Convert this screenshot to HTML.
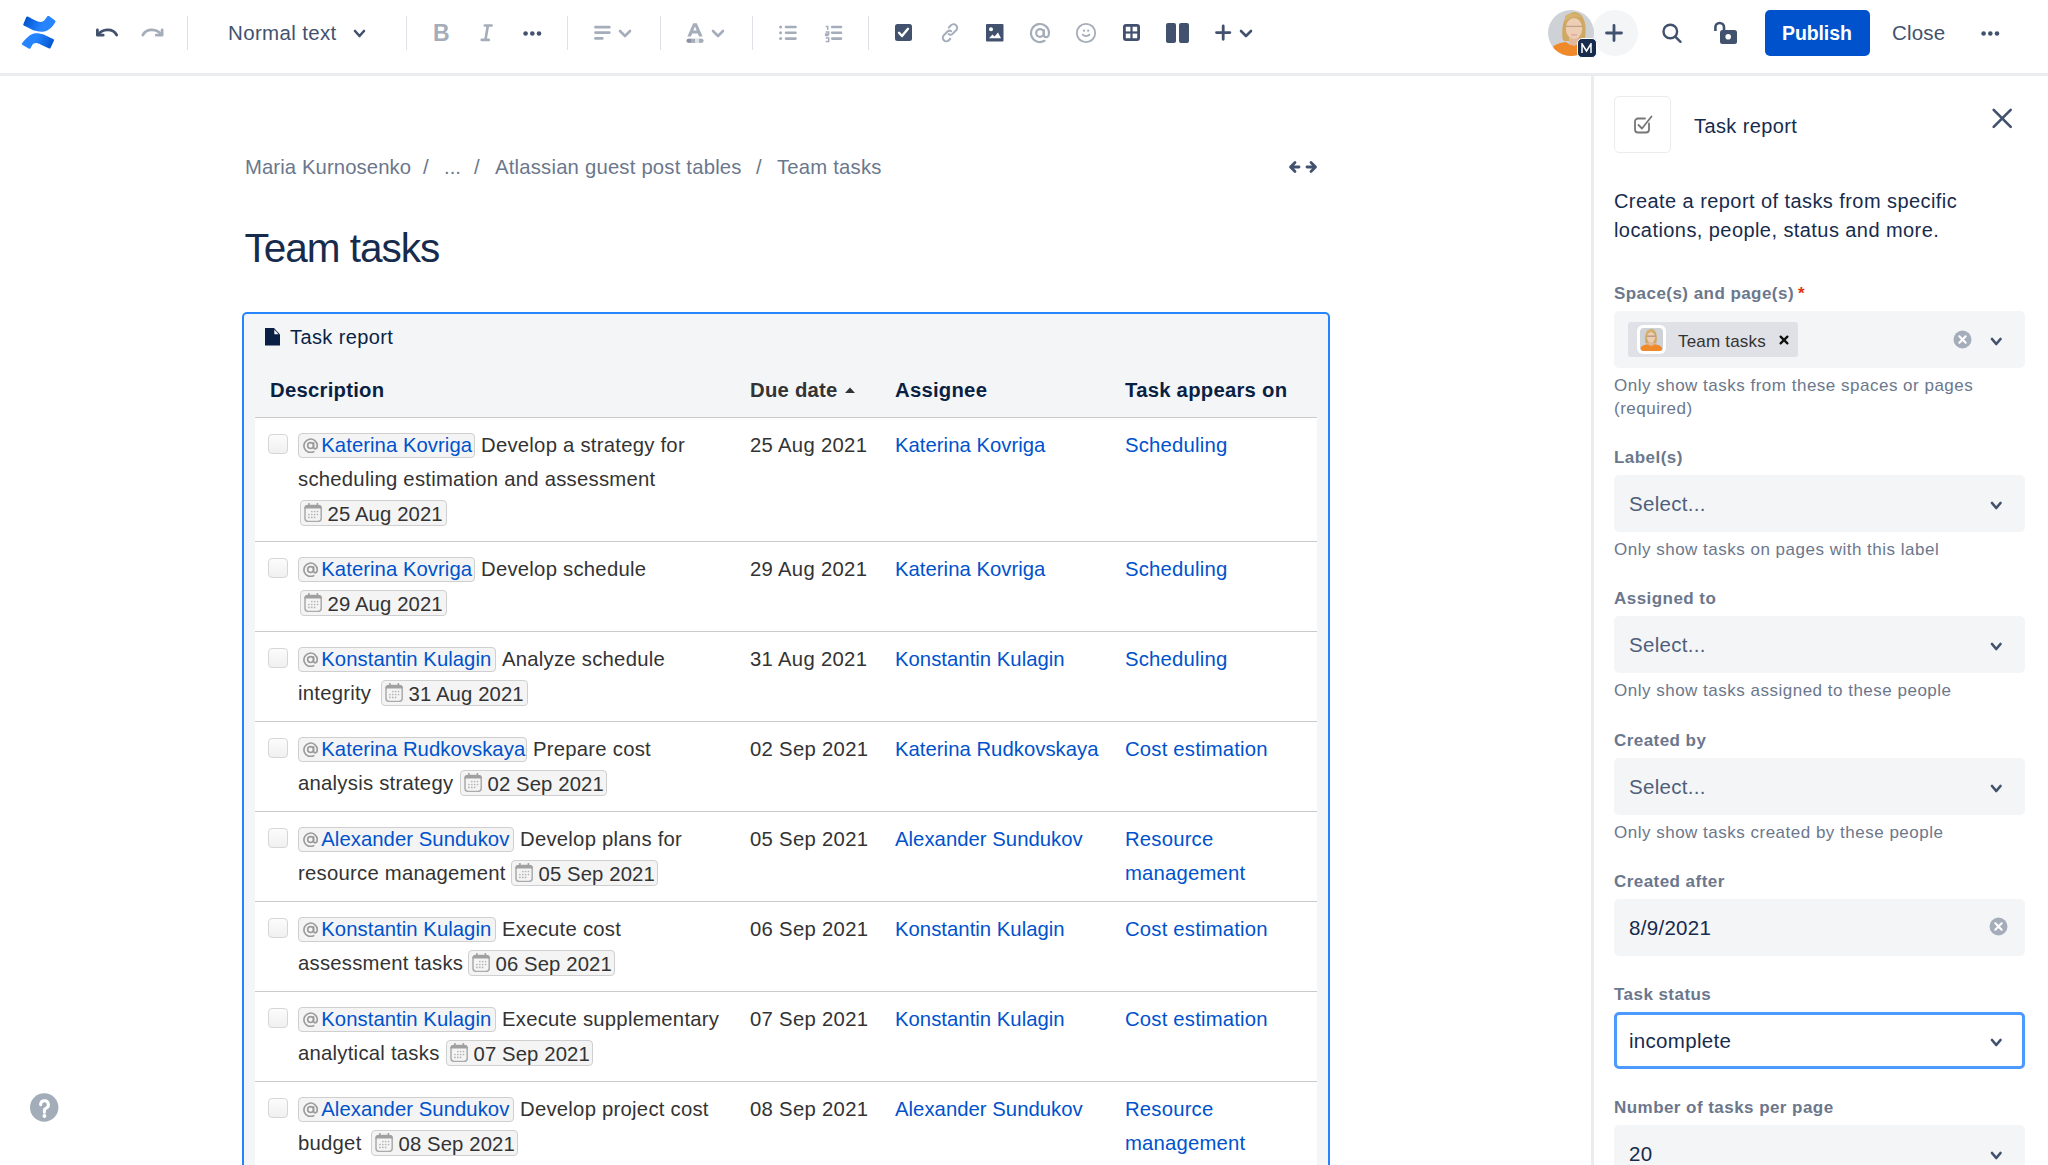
<!DOCTYPE html>
<html><head><meta charset="utf-8">
<style>
*{box-sizing:border-box;margin:0;padding:0}
html,body{width:2048px;height:1165px;overflow:hidden;background:#fff;font-family:"Liberation Sans",sans-serif;color:#172B4D}
.a{position:absolute;white-space:nowrap;line-height:normal}
svg.a{display:block}
.sep{position:absolute;top:16px;width:1px;height:34px;background:#DFE1E6}
.sel{position:absolute;left:1614px;width:411px;height:57px;background:#F4F5F7;border-radius:5px}
.chip{position:absolute;height:25px;border:1.5px solid #CFCFCF;border-radius:4px;background:#F4F4F4}
.cb{position:absolute;left:268px;width:20px;height:20px;border:1.5px solid #D6D6D6;border-radius:4px;background:linear-gradient(#FCFCFC,#F0F0F0)}
.rl{position:absolute;left:255px;width:1062px;height:1px;background:#C9CACC}
</style></head><body>
<div class="a" style="left:0;top:73px;width:2048px;height:3px;background:#EBECF0"></div>
<svg class="a" style="left:20px;top:14px" width="38" height="38" viewBox="0 0 38 38">
<defs><linearGradient id="lg1" gradientUnits="userSpaceOnUse" x1="5" y1="4" x2="22" y2="12"><stop offset="0" stop-color="#0052CC"/><stop offset="1" stop-color="#2684FF"/></linearGradient>
<linearGradient id="lg2" gradientUnits="userSpaceOnUse" x1="33" y1="33" x2="16" y2="25"><stop offset="0" stop-color="#0052CC"/><stop offset="1" stop-color="#2684FF"/></linearGradient></defs>
<path d="M7.5 2.5 C11 4 13 5.5 15 6.3 C17.5 7.3 19 8 20.5 7.9 C22.5 7.9 24 7 25 5.5 L27.6 2.1 C28 1.8 28.5 1.8 29 2.1 L35 6.5 C35.6 7 35.7 7.5 35.4 8 C33 12 31 14.5 27.6 16.2 C25.5 17.3 23 17.7 21.3 17.7 C18.5 17.7 16 17 13.8 16.6 L3.8 11.6 C3.3 11.3 3.1 10.8 3.3 10.3 L6.3 3 C6.6 2.4 7 2.3 7.5 2.5 Z" fill="url(#lg1)"/>
<path d="M1.9 29.6 C4 26.5 6 24.5 7.9 22.9 C10 21 12.5 19.5 15 19.3 C18 19 21 19.7 23.7 20.5 L33.5 25.2 C34 25.5 34.2 26 34 26.5 L30.5 34 C30.2 34.6 29.7 34.7 29.2 34.5 L20.5 30.4 C19 29.6 17 29 15.8 29 C14.5 29 13 29.8 12.6 30.4 L10.3 34.4 C10 34.9 9.5 35 9 34.7 L2.3 30.8 C1.8 30.5 1.6 30.1 1.9 29.6 Z" fill="url(#lg2)"/>
</svg>
<svg class="a" style="left:94px;top:25px" width="28" height="16" viewBox="0 0 28 16">
<path d="M3.4 4.9 V10.2 H9.2" fill="none" stroke="#42526E" stroke-width="2.8" stroke-linejoin="round" stroke-linecap="round"/>
<path d="M4.5 9.5 C8 4.2 18.5 2.5 22.7 10" fill="none" stroke="#42526E" stroke-width="2.8" stroke-linecap="round"/>
</svg>
<svg class="a" style="left:139px;top:25px" width="28" height="16" viewBox="0 0 28 16">
<path d="M23.1 4.9 V10.2 H17.3" fill="none" stroke="#A5ADBA" stroke-width="2.8" stroke-linejoin="round" stroke-linecap="round"/>
<path d="M22 9.5 C18.5 4.2 8 2.5 3.8 10" fill="none" stroke="#A5ADBA" stroke-width="2.8" stroke-linecap="round"/>
</svg>
<div class="sep" style="left:187px"></div>
<div class="sep" style="left:406px"></div>
<div class="sep" style="left:567px"></div>
<div class="sep" style="left:660px"></div>
<div class="sep" style="left:752px"></div>
<div class="sep" style="left:868px"></div>
<div class="a" style="left:228px;top:21px;font-size:20.5px;color:#42526E;font-weight:400;letter-spacing:0.35px;">Normal text</div>
<svg class="a" style="left:352px;top:28px" width="15" height="11" viewBox="-2 -2 15 11"><path d="M1 1 L5.5 6 L10 1" fill="none" stroke="#42526E" stroke-width="2.6" stroke-linecap="round" stroke-linejoin="round"/></svg>
<div class="a" style="left:433px;top:20px;font-size:23px;color:#A5ADBA;font-weight:700;letter-spacing:0px;">B</div>
<svg class="a" style="left:478px;top:23px" width="18" height="20" viewBox="0 0 18 20">
<path d="M6.8 2.5 H13.6 M3.7 16.9 H10.8 M9.9 2.5 L7.4 16.9" fill="none" stroke="#A5ADBA" stroke-width="2.6" stroke-linecap="round"/></svg>
<svg class="a" style="left:522px;top:29px" width="21" height="9" viewBox="0 0 21 9">
<circle cx="3.6" cy="4.5" r="2.3" fill="#42526E"/><circle cx="10.3" cy="4.5" r="2.3" fill="#42526E"/><circle cx="17" cy="4.5" r="2.3" fill="#42526E"/></svg>
<svg class="a" style="left:592px;top:24px" width="22" height="18" viewBox="0 0 22 18">
<path d="M3.5 3.2 H17.3 M3.5 8.6 H17.3 M3.5 14.4 H10.3" fill="none" stroke="#A5ADBA" stroke-width="2.8" stroke-linecap="round"/></svg>
<svg class="a" style="left:617px;top:28px" width="16" height="11" viewBox="-2 -2 16 11"><path d="M1 1 L6.0 6 L11 1" fill="none" stroke="#A5ADBA" stroke-width="2.6" stroke-linecap="round" stroke-linejoin="round"/></svg>
<svg class="a" style="left:685px;top:22px" width="20" height="22" viewBox="0 0 20 22">
<path d="M8.2 1.2 H11.8 L17.6 14.5 H14 L12.8 11.5 H7.2 L6 14.5 H2.4 Z M8.3 8.6 H11.7 L10 4.4 Z" fill="#A5ADBA" fill-rule="evenodd"/>
<rect x="1.5" y="16.8" width="17" height="4" rx="2" fill="#C1C7D0"/>
<path d="M3.5 16.8 H6 V20.8 H3.5 A2 2 0 0 1 3.5 16.8 Z" fill="#8993A4"/>
<rect x="6" y="16.8" width="4" height="4" fill="#A5ADBA"/><rect x="10" y="16.8" width="4" height="4" fill="#DFE1E6"/>
<path d="M14 16.8 H16.5 A2 2 0 0 1 16.5 20.8 H14 Z" fill="#A5ADBA"/></svg>
<svg class="a" style="left:710px;top:28px" width="16" height="11" viewBox="-2 -2 16 11"><path d="M1 1 L6.0 6 L11 1" fill="none" stroke="#A5ADBA" stroke-width="2.6" stroke-linecap="round" stroke-linejoin="round"/></svg>
<svg class="a" style="left:777px;top:24px" width="22" height="18" viewBox="0 0 22 18">
<circle cx="3.6" cy="3" r="1.5" fill="#A5ADBA"/><circle cx="3.6" cy="8.7" r="1.5" fill="#A5ADBA"/><circle cx="3.6" cy="14.6" r="1.5" fill="#A5ADBA"/>
<path d="M9 3 H18.5 M9 8.7 H18.5 M9 14.6 H18.5" fill="none" stroke="#A5ADBA" stroke-width="2.6" stroke-linecap="round"/></svg>
<svg class="a" style="left:823px;top:22px" width="22" height="22" viewBox="0 0 22 22">
<path transform="translate(0.2 1.6)" d="M2.5 3 H4.5 V6.5 M2.5 8.5 H5.5 V10.5 H2.5 V12 H5.5 M2.5 14.5 H5.5 V18 H2.5" fill="none" stroke="#A5ADBA" stroke-width="1.5"/>
<path d="M9.2 5 H18 M9.2 10.7 H18 M9.2 16.6 H18" fill="none" stroke="#A5ADBA" stroke-width="2.6" stroke-linecap="round"/></svg>
<svg class="a" style="left:895px;top:24px" width="17" height="17" viewBox="0 0 17 17">
<rect x="0" y="0" width="17" height="17" rx="2.5" fill="#42526E"/>
<path d="M4 8.8 L7 12 L13 4.8" fill="none" stroke="#fff" stroke-width="2.4" stroke-linecap="round" stroke-linejoin="round"/></svg>
<svg class="a" style="left:939px;top:22px" width="22" height="22" viewBox="0 0 22 22">
<g fill="none" stroke="#A5ADBA" stroke-width="2" stroke-linecap="round">
<path d="M9.7 5.6 L12 3.3 A3.5 3.5 0 0 1 17.2 8.2 L13.5 11.9 C12.6 12.8 11 13 9.6 12.2"/>
<path d="M12.2 9.3 C11 8.4 9.6 8.5 8.6 9.5 L4.8 13.3 A3.5 3.5 0 0 0 9.8 18.3 L11.3 16.8"/>
</g></svg>
<svg class="a" style="left:986px;top:24px" width="18" height="18" viewBox="0 0 18 18">
<rect x="0" y="0" width="17.5" height="17.5" rx="1" fill="#42526E"/>
<circle cx="5" cy="5.2" r="2" fill="#fff"/>
<path d="M3 14.3 L6.5 10.5 L8.5 12.5 L12 8.5 L15 14.3 Z" fill="#fff"/></svg>
<svg class="a" style="left:1029px;top:22px" width="22" height="22" viewBox="0 0 22 22">
<circle cx="11" cy="11" r="3.8" fill="none" stroke="#A5ADBA" stroke-width="2.2"/>
<path d="M14.8 8 V12.5 C14.8 14.5 16 15.2 17.2 15.2 C19 15.2 20 13 20 11 A9 9 0 1 0 15.5 18.8" fill="none" stroke="#A5ADBA" stroke-width="2.2" stroke-linecap="round"/></svg>
<svg class="a" style="left:1075px;top:22px" width="22" height="22" viewBox="0 0 22 22">
<circle cx="11" cy="11" r="9.2" fill="none" stroke="#A5ADBA" stroke-width="1.8"/>
<circle cx="9" cy="8.7" r="1.15" fill="#A5ADBA"/><circle cx="13.2" cy="8.7" r="1.15" fill="#A5ADBA"/>
<path d="M7.7 12.7 C9.3 14.6 12.9 14.6 14.5 12.7" fill="none" stroke="#A5ADBA" stroke-width="1.8" stroke-linecap="round"/></svg>
<svg class="a" style="left:1123px;top:24px" width="17" height="17" viewBox="0 0 17 17">
<rect x="0" y="0" width="17" height="17" rx="3" fill="#42526E"/>
<rect x="2.8" y="2.8" width="4.6" height="4.6" fill="#fff"/><rect x="9.6" y="2.8" width="4.6" height="4.6" fill="#fff"/>
<rect x="2.8" y="9.6" width="4.6" height="4.6" fill="#fff"/><rect x="9.6" y="9.6" width="4.6" height="4.6" fill="#fff"/></svg>
<svg class="a" style="left:1166px;top:23px" width="23" height="20" viewBox="0 0 23 20">
<rect x="0" y="0" width="10" height="20" rx="2" fill="#42526E"/><rect x="13" y="0" width="10" height="20" rx="2" fill="#42526E"/></svg>
<svg class="a" style="left:1213px;top:23px" width="20" height="20" viewBox="0 0 20 20">
<path d="M10.2 2.9 V16.3 M3.5 9.6 H16.9" stroke="#42526E" stroke-width="2.8" stroke-linecap="round"/></svg>
<svg class="a" style="left:1238px;top:28px" width="16" height="11" viewBox="-2 -2 16 11"><path d="M1 1 L6.0 6 L11 1" fill="none" stroke="#42526E" stroke-width="2.6" stroke-linecap="round" stroke-linejoin="round"/></svg>
<div class="a" style="left:1592px;top:10px;width:46px;height:46px;border-radius:50%;background:#F4F5F7"></div>
<svg class="a" style="left:1605px;top:24px" width="18" height="18" viewBox="0 0 18 18">
<path d="M9 1.5 V16.5 M1.5 9 H16.5" stroke="#42526E" stroke-width="2.8" stroke-linecap="round"/></svg>
<div class="a" style="left:1548px;top:10px;width:46px;height:46px;border-radius:50%;background:#CED1D5;overflow:hidden">
 <svg width="46" height="46" viewBox="0 0 46 46">
  <path d="M3 46 L5.5 36 C9 33.5 14 32.5 18 32 L22.5 35 L27 32 C33 33 38 36 41 46 Z" fill="#F0892A"/>
  <path d="M14.8 29.5 C13.5 20 14 4 26 2 C36 2.5 38.5 14 37.5 24 C37.2 27 37 29 36.5 31 L16 31 Z" fill="#CFA962"/>
  <path d="M21 27 H31 V34 L26 36 L21 34 Z" fill="#E2B89A"/>
  <ellipse cx="26" cy="18.5" rx="8.2" ry="10.6" fill="#EDCDB4"/>
  <path d="M17 6 C20 3 30 2.5 34.5 8 C33 7 29 6.5 26 7 C22 7.5 19 9 17.5 12 Z" fill="#D6B46E"/>
  <path d="M18 16.3 H34.5" stroke="#B8977A" stroke-width="1"/>
  <path d="M23 24.8 H29" stroke="#D9A5A0" stroke-width="1.3"/>
 </svg>
</div>
<div class="a" style="left:1576.5px;top:37.8px;width:20px;height:20px;border-radius:5px;background:#172B4D;border:1px solid #fff"></div>
<svg class="a" style="left:1581px;top:43px" width="11" height="10.5" viewBox="0 0 11 10.5"><path d="M1 10 V0.8 L5.5 8 L10 0.8 V10" fill="none" stroke="#fff" stroke-width="1.5" stroke-linejoin="miter"/></svg>
<svg class="a" style="left:1661px;top:22px" width="22" height="22" viewBox="0 0 22 22">
<circle cx="9.3" cy="9.5" r="6.8" fill="none" stroke="#42526E" stroke-width="2.4"/>
<path d="M14.5 14.8 L19.5 19.8" stroke="#42526E" stroke-width="2.4" stroke-linecap="round"/></svg>
<svg class="a" style="left:1712px;top:19px" width="28" height="27" viewBox="0 0 28 27">
<path d="M3.4 12 V8.3 A4.3 4.3 0 0 1 12 8.3 V12" fill="none" stroke="#42526E" stroke-width="2.6"/>
<rect x="8" y="11" width="17" height="14" rx="2.5" fill="#42526E"/>
<circle cx="16.2" cy="17.8" r="2.8" fill="#fff"/></svg>
<div class="a" style="left:1765px;top:10px;width:105px;height:46px;border-radius:5px;background:#0052CC"></div>
<div class="a" style="left:1782px;top:22px;font-size:19.5px;color:#fff;font-weight:700;letter-spacing:-0.1px;">Publish</div>
<div class="a" style="left:1892px;top:21px;font-size:20.5px;color:#42526E;font-weight:400;letter-spacing:0.2px;">Close</div>
<svg class="a" style="left:1980px;top:29px" width="21" height="9" viewBox="0 0 21 9">
<circle cx="3.6" cy="4.5" r="2.3" fill="#42526E"/><circle cx="10.3" cy="4.5" r="2.3" fill="#42526E"/><circle cx="17" cy="4.5" r="2.3" fill="#42526E"/></svg>
<div class="a" style="left:1591px;top:76px;width:3px;height:1089px;background:#EBECF0"></div>
<div class="a" style="left:1614px;top:96px;width:57px;height:57px;border:1.5px solid #EBECF0;border-radius:5px;background:#fff"></div>
<svg class="a" style="left:1632px;top:114px" width="22" height="22" viewBox="0 0 22 22">
<path d="M17 9.5 V15.5 A3 3 0 0 1 14 18.5 H6 A3 3 0 0 1 3 15.5 V7.5 A3 3 0 0 1 6 4.5 H13" fill="none" stroke="#777" stroke-width="1.8" stroke-linecap="round"/>
<path d="M6.5 11 L10 14.5 L19.5 2.5" fill="none" stroke="#777" stroke-width="1.8" stroke-linecap="round" stroke-linejoin="round"/></svg>
<svg class="a" style="left:1988px;top:104px" width="28" height="28" viewBox="0 0 28 28">
<path d="M5.7 5.9 L22.7 22.9 M22.7 5.9 L5.7 22.9" stroke="#42526E" stroke-width="2.7" stroke-linecap="round"/></svg>
<div class="a" style="left:1694px;top:115px;font-size:20px;color:#172B4D;font-weight:400;letter-spacing:0.4px;">Task report</div>
<div class="a" style="left:1614px;top:190px;font-size:20px;color:#172B4D;font-weight:400;letter-spacing:0.43px;">Create a report of tasks from specific</div>
<div class="a" style="left:1614px;top:219px;font-size:20px;color:#172B4D;font-weight:400;letter-spacing:0.43px;">locations, people, status and more.</div>
<div class="a" style="left:1614px;top:284px;font-size:17px;color:#6B778C;font-weight:700;letter-spacing:0.45px;">Space(s) and page(s)</div>
<div class="a" style="left:1798px;top:284px;font-size:17px;font-weight:700;color:#DE350B">*</div>
<div class="sel" style="top:311px"></div>
<div class="a" style="left:1628px;top:322px;width:170px;height:35px;border-radius:3px;background:#DFE1E6"></div>
<div class="a" style="left:1637px;top:325px;width:29px;height:29px;border-radius:6px;background:#fff"></div>
<div class="a" style="left:1640px;top:328px;width:23px;height:23px;border-radius:4px;background:#CED1D5;overflow:hidden">
<svg width="23" height="23" viewBox="0 0 46 46">
  <path d="M0 46 L2 38 C6 34 11 33 16 32.5 L22.5 35 L29 32.5 C34 33 39 34 43 38 L46 46 Z" fill="#F0892A"/>
  <path d="M10.8 29.5 C9.5 20 10 4 22 2 C32 2.5 34.5 14 33.5 24 C33.2 27 33 29 32.5 31 L12 31 Z" fill="#CFA962"/>
  <path d="M17 27 H27 V34 L22 36 L17 34 Z" fill="#E2B89A"/>
  <ellipse cx="22" cy="18.5" rx="8.2" ry="10.6" fill="#EDCDB4"/>
  <path d="M13 6 C16 3 26 2.5 30.5 8 C29 7 25 6.5 22 7 C18 7.5 15 9 13.5 12 Z" fill="#D6B46E"/>
  <path d="M14 16.3 H30.5" stroke="#8F6F5A" stroke-width="1.6"/>
</svg></div>
<svg class="a" style="left:1777px;top:333px" width="14" height="14" viewBox="0 0 14 14">
<path d="M3.6 3.6 L10.4 10.4 M10.4 3.6 L3.6 10.4" stroke="#111" stroke-width="2.3" stroke-linecap="round"/></svg>
<svg class="a" style="left:1953px;top:330px" width="19" height="19" viewBox="0 0 18 18">
<circle cx="9" cy="9" r="8.5" fill="#A5ADBA"/><path d="M6 6 L12 12 M12 6 L6 12" stroke="#fff" stroke-width="2" stroke-linecap="round"/></svg>
<div class="a" style="left:1678px;top:332px;font-size:17px;color:#333333;font-weight:400;letter-spacing:0.2px;">Team tasks</div>
<svg class="a" style="left:1989px;top:335.5px" width="14.5" height="11" viewBox="-2 -2 14.5 11"><path d="M1 1 L5.25 6 L9.5 1" fill="none" stroke="#42526E" stroke-width="2.7" stroke-linecap="round" stroke-linejoin="round"/></svg>
<div class="a" style="left:1614px;top:376px;font-size:17px;color:#6B778C;font-weight:400;letter-spacing:0.5px;">Only show tasks from these spaces or pages</div>
<div class="a" style="left:1614px;top:399px;font-size:17px;color:#6B778C;font-weight:400;letter-spacing:0.5px;">(required)</div>
<div class="a" style="left:1614px;top:448px;font-size:17px;color:#6B778C;font-weight:700;letter-spacing:0.45px;">Label(s)</div>
<div class="sel" style="top:475px"></div>
<div class="a" style="left:1629px;top:492px;font-size:20.5px;color:#505F79;font-weight:400;letter-spacing:0.3px;">Select...</div>
<svg class="a" style="left:1989px;top:499.5px" width="14.5" height="11" viewBox="-2 -2 14.5 11"><path d="M1 1 L5.25 6 L9.5 1" fill="none" stroke="#42526E" stroke-width="2.7" stroke-linecap="round" stroke-linejoin="round"/></svg>
<div class="a" style="left:1614px;top:540px;font-size:17px;color:#6B778C;font-weight:400;letter-spacing:0.5px;">Only show tasks on pages with this label</div>
<div class="a" style="left:1614px;top:589px;font-size:17px;color:#6B778C;font-weight:700;letter-spacing:0.45px;">Assigned to</div>
<div class="sel" style="top:616px"></div>
<div class="a" style="left:1629px;top:633px;font-size:20.5px;color:#505F79;font-weight:400;letter-spacing:0.3px;">Select...</div>
<svg class="a" style="left:1989px;top:640.5px" width="14.5" height="11" viewBox="-2 -2 14.5 11"><path d="M1 1 L5.25 6 L9.5 1" fill="none" stroke="#42526E" stroke-width="2.7" stroke-linecap="round" stroke-linejoin="round"/></svg>
<div class="a" style="left:1614px;top:681px;font-size:17px;color:#6B778C;font-weight:400;letter-spacing:0.5px;">Only show tasks assigned to these people</div>
<div class="a" style="left:1614px;top:731px;font-size:17px;color:#6B778C;font-weight:700;letter-spacing:0.45px;">Created by</div>
<div class="sel" style="top:758px"></div>
<div class="a" style="left:1629px;top:775px;font-size:20.5px;color:#505F79;font-weight:400;letter-spacing:0.3px;">Select...</div>
<svg class="a" style="left:1989px;top:782.5px" width="14.5" height="11" viewBox="-2 -2 14.5 11"><path d="M1 1 L5.25 6 L9.5 1" fill="none" stroke="#42526E" stroke-width="2.7" stroke-linecap="round" stroke-linejoin="round"/></svg>
<div class="a" style="left:1614px;top:823px;font-size:17px;color:#6B778C;font-weight:400;letter-spacing:0.5px;">Only show tasks created by these people</div>
<div class="a" style="left:1614px;top:872px;font-size:17px;color:#6B778C;font-weight:700;letter-spacing:0.45px;">Created after</div>
<div class="sel" style="top:899px"></div>
<div class="a" style="left:1629px;top:916px;font-size:20.5px;color:#172B4D;font-weight:400;letter-spacing:0.3px;">8/9/2021</div>
<svg class="a" style="left:1989px;top:917px" width="19" height="19" viewBox="0 0 18 18">
<circle cx="9" cy="9" r="8.5" fill="#A5ADBA"/><path d="M6 6 L12 12 M12 6 L6 12" stroke="#fff" stroke-width="2" stroke-linecap="round"/></svg>
<div class="a" style="left:1614px;top:985px;font-size:17px;color:#6B778C;font-weight:700;letter-spacing:0.45px;">Task status</div>
<div class="sel" style="top:1012px;background:#fff;border:3px solid #4C9AFF"></div>
<div class="a" style="left:1629px;top:1029px;font-size:20.5px;color:#172B4D;font-weight:400;letter-spacing:0.3px;">incomplete</div>
<svg class="a" style="left:1989px;top:1036.5px" width="14.5" height="11" viewBox="-2 -2 14.5 11"><path d="M1 1 L5.25 6 L9.5 1" fill="none" stroke="#42526E" stroke-width="2.7" stroke-linecap="round" stroke-linejoin="round"/></svg>
<div class="a" style="left:1614px;top:1098px;font-size:17px;color:#6B778C;font-weight:700;letter-spacing:0.45px;">Number of tasks per page</div>
<div class="sel" style="top:1125px"></div>
<div class="a" style="left:1629px;top:1142px;font-size:20.5px;color:#172B4D;font-weight:400;letter-spacing:0.3px;">20</div>
<svg class="a" style="left:1989px;top:1149.5px" width="14.5" height="11" viewBox="-2 -2 14.5 11"><path d="M1 1 L5.25 6 L9.5 1" fill="none" stroke="#42526E" stroke-width="2.7" stroke-linecap="round" stroke-linejoin="round"/></svg>
<svg class="a" style="left:29px;top:1093px" width="30" height="30" viewBox="0 0 30 30">
<circle cx="15.2" cy="14.5" r="14.2" fill="#A3ACB9"/>
<path d="M11.6 11.8 A3.9 3.9 0 1 1 16.9 15.3 C15.9 15.7 15.4 16.1 15.4 17.1 V19.3" fill="none" stroke="#fff" stroke-width="3" stroke-linecap="round"/>
<circle cx="15.4" cy="23" r="1.9" fill="#fff"/></svg>
<div class="a" style="left:245px;top:156px;font-size:20.3px;color:#6B778C;font-weight:400;letter-spacing:0.1px;">Maria Kurnosenko</div>
<div class="a" style="left:423px;top:156px;font-size:20.3px;color:#6B778C;font-weight:400;letter-spacing:0px;">/</div>
<div class="a" style="left:444px;top:156px;font-size:20.3px;color:#6B778C;font-weight:400;letter-spacing:0px;">...</div>
<div class="a" style="left:474px;top:156px;font-size:20.3px;color:#6B778C;font-weight:400;letter-spacing:0px;">/</div>
<div class="a" style="left:495px;top:156px;font-size:20.3px;color:#6B778C;font-weight:400;letter-spacing:0.2px;">Atlassian guest post tables</div>
<div class="a" style="left:756px;top:156px;font-size:20.3px;color:#6B778C;font-weight:400;letter-spacing:0px;">/</div>
<div class="a" style="left:777px;top:156px;font-size:20.3px;color:#6B778C;font-weight:400;letter-spacing:0.2px;">Team tasks</div>
<svg class="a" style="left:1288px;top:158px" width="30" height="18" viewBox="0 0 30 18">
<path d="M3 9 H11 M7 4.5 L2.5 9 L7 13.5 M19 9 H27 M23 4.5 L27.5 9 L23 13.5" fill="none" stroke="#42526E" stroke-width="2.8" stroke-linecap="round" stroke-linejoin="round"/></svg>
<div class="a" style="left:244.5px;top:224.5px;font-size:40.5px;color:#172B4D;font-weight:400;letter-spacing:-1.0px;">Team tasks</div>
<div class="a" style="left:242px;top:312px;width:1088px;height:900px;border:2px solid #2684FF;border-radius:5px;background:#F4F5F7"></div>
<div class="a" style="left:255px;top:417px;width:1062px;height:800px;background:#fff"></div>
<svg class="a" style="left:265px;top:328px" width="16" height="18" viewBox="0 0 16 18">
<path d="M0 0 H9 L15 6.5 V17.5 H0 Z" fill="#0A1F44"/><path d="M9.3 1.5 V6.2 H13.6 Z" fill="#F4F5F7"/></svg>
<div class="a" style="left:290px;top:326px;font-size:20px;color:#0A1F44;font-weight:400;letter-spacing:0.4px;">Task report</div>
<div class="a" style="left:270px;top:379px;font-size:20.3px;color:#0A1F44;font-weight:700;letter-spacing:0.25px;">Description</div>
<div class="a" style="left:750px;top:379px;font-size:20.3px;color:#333333;font-weight:700;letter-spacing:0.25px;">Due date</div>
<svg class="a" style="left:844px;top:386px" width="12" height="8" viewBox="0 0 12 8"><path d="M1 7 L6 1.5 L11 7 Z" fill="#333"/></svg>
<div class="a" style="left:895px;top:379px;font-size:20.3px;color:#0A1F44;font-weight:700;letter-spacing:0.25px;">Assignee</div>
<div class="a" style="left:1125px;top:379px;font-size:20.3px;color:#0A1F44;font-weight:700;letter-spacing:0.25px;">Task appears on</div>
<div class="rl" style="top:417px"></div>
<div class="cb" style="top:434px"></div>
<div class="chip" style="left:298px;top:433px;width:177px"></div>
<svg class="a" style="left:303px;top:437.5px" width="15.6" height="15.6" viewBox="0.3 0.3 16.4 16.4"><circle cx="8.3" cy="8.3" r="3.1" fill="none" stroke="#9A9A9A" stroke-width="1.7"/><path d="M11.4 5.3 V9.6 C11.4 11 12.2 11.7 13.2 11.7 C14.6 11.7 15.3 10.2 15.3 8.3 A7 7 0 1 0 11.6 14.6" fill="none" stroke="#9A9A9A" stroke-width="1.7" stroke-linecap="round"/></svg>
<div class="a" style="left:321.3px;top:434px;font-size:20.3px;color:#0052CC;font-weight:400;letter-spacing:0.05px;">Katerina Kovriga</div>
<div class="a" style="left:481px;top:434px;font-size:20.3px;color:#333333;font-weight:400;letter-spacing:0.25px;">Develop a strategy for</div>
<div class="a" style="left:298px;top:468px;font-size:20.3px;color:#333333;font-weight:400;letter-spacing:0.25px;">scheduling estimation and assessment</div>
<div class="chip" style="left:300px;top:499.5px;width:146.5px;height:26px"></div>
<svg class="a" style="left:303px;top:503px" width="20" height="19" viewBox="0 -1 20 19"><rect x="2" y="1.6" width="16.2" height="15.8" rx="3.2" fill="#F4F4F4" stroke="#ABABAB" stroke-width="1.5"/><path d="M1.3 4.6 V3.9 A3.2 3.2 0 0 1 4.5 0.9 H15.7 A3.2 3.2 0 0 1 18.9 3.9 V4.6 Z" fill="#A0A0A0"/><path d="M5.9 -0.4 V2 M14.4 -0.4 V2" stroke="#A0A0A0" stroke-width="1.6" stroke-linecap="round"/><g fill="#B2B2B2"><circle cx="8.8" cy="7.5" r="0.85"/><circle cx="11.6" cy="7.5" r="0.85"/><circle cx="14.5" cy="7.5" r="0.85"/><circle cx="5.9" cy="10.5" r="0.85"/><circle cx="8.8" cy="10.5" r="0.85"/><circle cx="11.6" cy="10.5" r="0.85"/><circle cx="14.5" cy="10.5" r="0.85"/><circle cx="5.9" cy="13.4" r="0.85"/><circle cx="8.8" cy="13.4" r="0.85"/><circle cx="11.6" cy="13.4" r="0.85"/></g></svg>
<div class="a" style="left:327.5px;top:502.79999999999995px;font-size:20.3px;color:#333333;font-weight:400;letter-spacing:0.12px;">25 Aug 2021</div>
<div class="a" style="left:750px;top:434px;font-size:20.3px;color:#333333;font-weight:400;letter-spacing:0.3px;">25 Aug 2021</div>
<div class="a" style="left:895px;top:434px;font-size:20.3px;color:#0052CC;font-weight:400;letter-spacing:0.03px;">Katerina Kovriga</div>
<div class="a" style="left:1125px;top:434px;font-size:20.3px;color:#0052CC;font-weight:400;letter-spacing:0.2px;">Scheduling</div>
<div class="rl" style="top:541px"></div>
<div class="cb" style="top:558px"></div>
<div class="chip" style="left:298px;top:557px;width:177px"></div>
<svg class="a" style="left:303px;top:561.5px" width="15.6" height="15.6" viewBox="0.3 0.3 16.4 16.4"><circle cx="8.3" cy="8.3" r="3.1" fill="none" stroke="#9A9A9A" stroke-width="1.7"/><path d="M11.4 5.3 V9.6 C11.4 11 12.2 11.7 13.2 11.7 C14.6 11.7 15.3 10.2 15.3 8.3 A7 7 0 1 0 11.6 14.6" fill="none" stroke="#9A9A9A" stroke-width="1.7" stroke-linecap="round"/></svg>
<div class="a" style="left:321.3px;top:558px;font-size:20.3px;color:#0052CC;font-weight:400;letter-spacing:0.05px;">Katerina Kovriga</div>
<div class="a" style="left:481px;top:558px;font-size:20.3px;color:#333333;font-weight:400;letter-spacing:0.25px;">Develop schedule</div>
<div class="chip" style="left:300px;top:589.5px;width:146.5px;height:26px"></div>
<svg class="a" style="left:303px;top:593px" width="20" height="19" viewBox="0 -1 20 19"><rect x="2" y="1.6" width="16.2" height="15.8" rx="3.2" fill="#F4F4F4" stroke="#ABABAB" stroke-width="1.5"/><path d="M1.3 4.6 V3.9 A3.2 3.2 0 0 1 4.5 0.9 H15.7 A3.2 3.2 0 0 1 18.9 3.9 V4.6 Z" fill="#A0A0A0"/><path d="M5.9 -0.4 V2 M14.4 -0.4 V2" stroke="#A0A0A0" stroke-width="1.6" stroke-linecap="round"/><g fill="#B2B2B2"><circle cx="8.8" cy="7.5" r="0.85"/><circle cx="11.6" cy="7.5" r="0.85"/><circle cx="14.5" cy="7.5" r="0.85"/><circle cx="5.9" cy="10.5" r="0.85"/><circle cx="8.8" cy="10.5" r="0.85"/><circle cx="11.6" cy="10.5" r="0.85"/><circle cx="14.5" cy="10.5" r="0.85"/><circle cx="5.9" cy="13.4" r="0.85"/><circle cx="8.8" cy="13.4" r="0.85"/><circle cx="11.6" cy="13.4" r="0.85"/></g></svg>
<div class="a" style="left:327.5px;top:592.8px;font-size:20.3px;color:#333333;font-weight:400;letter-spacing:0.12px;">29 Aug 2021</div>
<div class="a" style="left:750px;top:558px;font-size:20.3px;color:#333333;font-weight:400;letter-spacing:0.3px;">29 Aug 2021</div>
<div class="a" style="left:895px;top:558px;font-size:20.3px;color:#0052CC;font-weight:400;letter-spacing:0.03px;">Katerina Kovriga</div>
<div class="a" style="left:1125px;top:558px;font-size:20.3px;color:#0052CC;font-weight:400;letter-spacing:0.2px;">Scheduling</div>
<div class="rl" style="top:631px"></div>
<div class="cb" style="top:648px"></div>
<div class="chip" style="left:298px;top:647px;width:198px"></div>
<svg class="a" style="left:303px;top:651.5px" width="15.6" height="15.6" viewBox="0.3 0.3 16.4 16.4"><circle cx="8.3" cy="8.3" r="3.1" fill="none" stroke="#9A9A9A" stroke-width="1.7"/><path d="M11.4 5.3 V9.6 C11.4 11 12.2 11.7 13.2 11.7 C14.6 11.7 15.3 10.2 15.3 8.3 A7 7 0 1 0 11.6 14.6" fill="none" stroke="#9A9A9A" stroke-width="1.7" stroke-linecap="round"/></svg>
<div class="a" style="left:321.3px;top:648px;font-size:20.3px;color:#0052CC;font-weight:400;letter-spacing:0.05px;">Konstantin Kulagin</div>
<div class="a" style="left:502px;top:648px;font-size:20.3px;color:#333333;font-weight:400;letter-spacing:0.25px;">Analyze schedule</div>
<div class="a" style="left:298px;top:682px;font-size:20.3px;color:#333333;font-weight:400;letter-spacing:0.25px;">integrity</div>
<div class="chip" style="left:381px;top:679.5px;width:146.5px;height:26px"></div>
<svg class="a" style="left:384px;top:683px" width="20" height="19" viewBox="0 -1 20 19"><rect x="2" y="1.6" width="16.2" height="15.8" rx="3.2" fill="#F4F4F4" stroke="#ABABAB" stroke-width="1.5"/><path d="M1.3 4.6 V3.9 A3.2 3.2 0 0 1 4.5 0.9 H15.7 A3.2 3.2 0 0 1 18.9 3.9 V4.6 Z" fill="#A0A0A0"/><path d="M5.9 -0.4 V2 M14.4 -0.4 V2" stroke="#A0A0A0" stroke-width="1.6" stroke-linecap="round"/><g fill="#B2B2B2"><circle cx="8.8" cy="7.5" r="0.85"/><circle cx="11.6" cy="7.5" r="0.85"/><circle cx="14.5" cy="7.5" r="0.85"/><circle cx="5.9" cy="10.5" r="0.85"/><circle cx="8.8" cy="10.5" r="0.85"/><circle cx="11.6" cy="10.5" r="0.85"/><circle cx="14.5" cy="10.5" r="0.85"/><circle cx="5.9" cy="13.4" r="0.85"/><circle cx="8.8" cy="13.4" r="0.85"/><circle cx="11.6" cy="13.4" r="0.85"/></g></svg>
<div class="a" style="left:408.5px;top:682.8px;font-size:20.3px;color:#333333;font-weight:400;letter-spacing:0.12px;">31 Aug 2021</div>
<div class="a" style="left:750px;top:648px;font-size:20.3px;color:#333333;font-weight:400;letter-spacing:0.3px;">31 Aug 2021</div>
<div class="a" style="left:895px;top:648px;font-size:20.3px;color:#0052CC;font-weight:400;letter-spacing:0.03px;">Konstantin Kulagin</div>
<div class="a" style="left:1125px;top:648px;font-size:20.3px;color:#0052CC;font-weight:400;letter-spacing:0.2px;">Scheduling</div>
<div class="rl" style="top:721px"></div>
<div class="cb" style="top:738px"></div>
<div class="chip" style="left:298px;top:737px;width:229px"></div>
<svg class="a" style="left:303px;top:741.5px" width="15.6" height="15.6" viewBox="0.3 0.3 16.4 16.4"><circle cx="8.3" cy="8.3" r="3.1" fill="none" stroke="#9A9A9A" stroke-width="1.7"/><path d="M11.4 5.3 V9.6 C11.4 11 12.2 11.7 13.2 11.7 C14.6 11.7 15.3 10.2 15.3 8.3 A7 7 0 1 0 11.6 14.6" fill="none" stroke="#9A9A9A" stroke-width="1.7" stroke-linecap="round"/></svg>
<div class="a" style="left:321.3px;top:738px;font-size:20.3px;color:#0052CC;font-weight:400;letter-spacing:0.05px;">Katerina Rudkovskaya</div>
<div class="a" style="left:533px;top:738px;font-size:20.3px;color:#333333;font-weight:400;letter-spacing:0.25px;">Prepare cost</div>
<div class="a" style="left:298px;top:772px;font-size:20.3px;color:#333333;font-weight:400;letter-spacing:0.25px;">analysis strategy</div>
<div class="chip" style="left:460px;top:769.5px;width:146.5px;height:26px"></div>
<svg class="a" style="left:463px;top:773px" width="20" height="19" viewBox="0 -1 20 19"><rect x="2" y="1.6" width="16.2" height="15.8" rx="3.2" fill="#F4F4F4" stroke="#ABABAB" stroke-width="1.5"/><path d="M1.3 4.6 V3.9 A3.2 3.2 0 0 1 4.5 0.9 H15.7 A3.2 3.2 0 0 1 18.9 3.9 V4.6 Z" fill="#A0A0A0"/><path d="M5.9 -0.4 V2 M14.4 -0.4 V2" stroke="#A0A0A0" stroke-width="1.6" stroke-linecap="round"/><g fill="#B2B2B2"><circle cx="8.8" cy="7.5" r="0.85"/><circle cx="11.6" cy="7.5" r="0.85"/><circle cx="14.5" cy="7.5" r="0.85"/><circle cx="5.9" cy="10.5" r="0.85"/><circle cx="8.8" cy="10.5" r="0.85"/><circle cx="11.6" cy="10.5" r="0.85"/><circle cx="14.5" cy="10.5" r="0.85"/><circle cx="5.9" cy="13.4" r="0.85"/><circle cx="8.8" cy="13.4" r="0.85"/><circle cx="11.6" cy="13.4" r="0.85"/></g></svg>
<div class="a" style="left:487.5px;top:772.8px;font-size:20.3px;color:#333333;font-weight:400;letter-spacing:0.12px;">02 Sep 2021</div>
<div class="a" style="left:750px;top:738px;font-size:20.3px;color:#333333;font-weight:400;letter-spacing:0.3px;">02 Sep 2021</div>
<div class="a" style="left:895px;top:738px;font-size:20.3px;color:#0052CC;font-weight:400;letter-spacing:0.03px;">Katerina Rudkovskaya</div>
<div class="a" style="left:1125px;top:738px;font-size:20.3px;color:#0052CC;font-weight:400;letter-spacing:0.2px;">Cost estimation</div>
<div class="rl" style="top:811px"></div>
<div class="cb" style="top:828px"></div>
<div class="chip" style="left:298px;top:827px;width:216px"></div>
<svg class="a" style="left:303px;top:831.5px" width="15.6" height="15.6" viewBox="0.3 0.3 16.4 16.4"><circle cx="8.3" cy="8.3" r="3.1" fill="none" stroke="#9A9A9A" stroke-width="1.7"/><path d="M11.4 5.3 V9.6 C11.4 11 12.2 11.7 13.2 11.7 C14.6 11.7 15.3 10.2 15.3 8.3 A7 7 0 1 0 11.6 14.6" fill="none" stroke="#9A9A9A" stroke-width="1.7" stroke-linecap="round"/></svg>
<div class="a" style="left:321.3px;top:828px;font-size:20.3px;color:#0052CC;font-weight:400;letter-spacing:0.05px;">Alexander Sundukov</div>
<div class="a" style="left:520px;top:828px;font-size:20.3px;color:#333333;font-weight:400;letter-spacing:0.25px;">Develop plans for</div>
<div class="a" style="left:298px;top:862px;font-size:20.3px;color:#333333;font-weight:400;letter-spacing:0.25px;">resource management</div>
<div class="chip" style="left:511px;top:859.5px;width:146.5px;height:26px"></div>
<svg class="a" style="left:514px;top:863px" width="20" height="19" viewBox="0 -1 20 19"><rect x="2" y="1.6" width="16.2" height="15.8" rx="3.2" fill="#F4F4F4" stroke="#ABABAB" stroke-width="1.5"/><path d="M1.3 4.6 V3.9 A3.2 3.2 0 0 1 4.5 0.9 H15.7 A3.2 3.2 0 0 1 18.9 3.9 V4.6 Z" fill="#A0A0A0"/><path d="M5.9 -0.4 V2 M14.4 -0.4 V2" stroke="#A0A0A0" stroke-width="1.6" stroke-linecap="round"/><g fill="#B2B2B2"><circle cx="8.8" cy="7.5" r="0.85"/><circle cx="11.6" cy="7.5" r="0.85"/><circle cx="14.5" cy="7.5" r="0.85"/><circle cx="5.9" cy="10.5" r="0.85"/><circle cx="8.8" cy="10.5" r="0.85"/><circle cx="11.6" cy="10.5" r="0.85"/><circle cx="14.5" cy="10.5" r="0.85"/><circle cx="5.9" cy="13.4" r="0.85"/><circle cx="8.8" cy="13.4" r="0.85"/><circle cx="11.6" cy="13.4" r="0.85"/></g></svg>
<div class="a" style="left:538.5px;top:862.8px;font-size:20.3px;color:#333333;font-weight:400;letter-spacing:0.12px;">05 Sep 2021</div>
<div class="a" style="left:750px;top:828px;font-size:20.3px;color:#333333;font-weight:400;letter-spacing:0.3px;">05 Sep 2021</div>
<div class="a" style="left:895px;top:828px;font-size:20.3px;color:#0052CC;font-weight:400;letter-spacing:0.03px;">Alexander Sundukov</div>
<div class="a" style="left:1125px;top:828px;font-size:20.3px;color:#0052CC;font-weight:400;letter-spacing:0.2px;">Resource</div>
<div class="a" style="left:1125px;top:862px;font-size:20.3px;color:#0052CC;font-weight:400;letter-spacing:0.2px;">management</div>
<div class="rl" style="top:901px"></div>
<div class="cb" style="top:918px"></div>
<div class="chip" style="left:298px;top:917px;width:198px"></div>
<svg class="a" style="left:303px;top:921.5px" width="15.6" height="15.6" viewBox="0.3 0.3 16.4 16.4"><circle cx="8.3" cy="8.3" r="3.1" fill="none" stroke="#9A9A9A" stroke-width="1.7"/><path d="M11.4 5.3 V9.6 C11.4 11 12.2 11.7 13.2 11.7 C14.6 11.7 15.3 10.2 15.3 8.3 A7 7 0 1 0 11.6 14.6" fill="none" stroke="#9A9A9A" stroke-width="1.7" stroke-linecap="round"/></svg>
<div class="a" style="left:321.3px;top:918px;font-size:20.3px;color:#0052CC;font-weight:400;letter-spacing:0.05px;">Konstantin Kulagin</div>
<div class="a" style="left:502px;top:918px;font-size:20.3px;color:#333333;font-weight:400;letter-spacing:0.25px;">Execute cost</div>
<div class="a" style="left:298px;top:952px;font-size:20.3px;color:#333333;font-weight:400;letter-spacing:0.25px;">assessment tasks</div>
<div class="chip" style="left:468px;top:949.5px;width:146.5px;height:26px"></div>
<svg class="a" style="left:471px;top:953px" width="20" height="19" viewBox="0 -1 20 19"><rect x="2" y="1.6" width="16.2" height="15.8" rx="3.2" fill="#F4F4F4" stroke="#ABABAB" stroke-width="1.5"/><path d="M1.3 4.6 V3.9 A3.2 3.2 0 0 1 4.5 0.9 H15.7 A3.2 3.2 0 0 1 18.9 3.9 V4.6 Z" fill="#A0A0A0"/><path d="M5.9 -0.4 V2 M14.4 -0.4 V2" stroke="#A0A0A0" stroke-width="1.6" stroke-linecap="round"/><g fill="#B2B2B2"><circle cx="8.8" cy="7.5" r="0.85"/><circle cx="11.6" cy="7.5" r="0.85"/><circle cx="14.5" cy="7.5" r="0.85"/><circle cx="5.9" cy="10.5" r="0.85"/><circle cx="8.8" cy="10.5" r="0.85"/><circle cx="11.6" cy="10.5" r="0.85"/><circle cx="14.5" cy="10.5" r="0.85"/><circle cx="5.9" cy="13.4" r="0.85"/><circle cx="8.8" cy="13.4" r="0.85"/><circle cx="11.6" cy="13.4" r="0.85"/></g></svg>
<div class="a" style="left:495.5px;top:952.8px;font-size:20.3px;color:#333333;font-weight:400;letter-spacing:0.12px;">06 Sep 2021</div>
<div class="a" style="left:750px;top:918px;font-size:20.3px;color:#333333;font-weight:400;letter-spacing:0.3px;">06 Sep 2021</div>
<div class="a" style="left:895px;top:918px;font-size:20.3px;color:#0052CC;font-weight:400;letter-spacing:0.03px;">Konstantin Kulagin</div>
<div class="a" style="left:1125px;top:918px;font-size:20.3px;color:#0052CC;font-weight:400;letter-spacing:0.2px;">Cost estimation</div>
<div class="rl" style="top:991px"></div>
<div class="cb" style="top:1008px"></div>
<div class="chip" style="left:298px;top:1007px;width:198px"></div>
<svg class="a" style="left:303px;top:1011.5px" width="15.6" height="15.6" viewBox="0.3 0.3 16.4 16.4"><circle cx="8.3" cy="8.3" r="3.1" fill="none" stroke="#9A9A9A" stroke-width="1.7"/><path d="M11.4 5.3 V9.6 C11.4 11 12.2 11.7 13.2 11.7 C14.6 11.7 15.3 10.2 15.3 8.3 A7 7 0 1 0 11.6 14.6" fill="none" stroke="#9A9A9A" stroke-width="1.7" stroke-linecap="round"/></svg>
<div class="a" style="left:321.3px;top:1008px;font-size:20.3px;color:#0052CC;font-weight:400;letter-spacing:0.05px;">Konstantin Kulagin</div>
<div class="a" style="left:502px;top:1008px;font-size:20.3px;color:#333333;font-weight:400;letter-spacing:0.25px;">Execute supplementary</div>
<div class="a" style="left:298px;top:1042px;font-size:20.3px;color:#333333;font-weight:400;letter-spacing:0.25px;">analytical tasks</div>
<div class="chip" style="left:446px;top:1039.5px;width:146.5px;height:26px"></div>
<svg class="a" style="left:449px;top:1043px" width="20" height="19" viewBox="0 -1 20 19"><rect x="2" y="1.6" width="16.2" height="15.8" rx="3.2" fill="#F4F4F4" stroke="#ABABAB" stroke-width="1.5"/><path d="M1.3 4.6 V3.9 A3.2 3.2 0 0 1 4.5 0.9 H15.7 A3.2 3.2 0 0 1 18.9 3.9 V4.6 Z" fill="#A0A0A0"/><path d="M5.9 -0.4 V2 M14.4 -0.4 V2" stroke="#A0A0A0" stroke-width="1.6" stroke-linecap="round"/><g fill="#B2B2B2"><circle cx="8.8" cy="7.5" r="0.85"/><circle cx="11.6" cy="7.5" r="0.85"/><circle cx="14.5" cy="7.5" r="0.85"/><circle cx="5.9" cy="10.5" r="0.85"/><circle cx="8.8" cy="10.5" r="0.85"/><circle cx="11.6" cy="10.5" r="0.85"/><circle cx="14.5" cy="10.5" r="0.85"/><circle cx="5.9" cy="13.4" r="0.85"/><circle cx="8.8" cy="13.4" r="0.85"/><circle cx="11.6" cy="13.4" r="0.85"/></g></svg>
<div class="a" style="left:473.5px;top:1042.8px;font-size:20.3px;color:#333333;font-weight:400;letter-spacing:0.12px;">07 Sep 2021</div>
<div class="a" style="left:750px;top:1008px;font-size:20.3px;color:#333333;font-weight:400;letter-spacing:0.3px;">07 Sep 2021</div>
<div class="a" style="left:895px;top:1008px;font-size:20.3px;color:#0052CC;font-weight:400;letter-spacing:0.03px;">Konstantin Kulagin</div>
<div class="a" style="left:1125px;top:1008px;font-size:20.3px;color:#0052CC;font-weight:400;letter-spacing:0.2px;">Cost estimation</div>
<div class="rl" style="top:1081px"></div>
<div class="cb" style="top:1098px"></div>
<div class="chip" style="left:298px;top:1097px;width:216px"></div>
<svg class="a" style="left:303px;top:1101.5px" width="15.6" height="15.6" viewBox="0.3 0.3 16.4 16.4"><circle cx="8.3" cy="8.3" r="3.1" fill="none" stroke="#9A9A9A" stroke-width="1.7"/><path d="M11.4 5.3 V9.6 C11.4 11 12.2 11.7 13.2 11.7 C14.6 11.7 15.3 10.2 15.3 8.3 A7 7 0 1 0 11.6 14.6" fill="none" stroke="#9A9A9A" stroke-width="1.7" stroke-linecap="round"/></svg>
<div class="a" style="left:321.3px;top:1098px;font-size:20.3px;color:#0052CC;font-weight:400;letter-spacing:0.05px;">Alexander Sundukov</div>
<div class="a" style="left:520px;top:1098px;font-size:20.3px;color:#333333;font-weight:400;letter-spacing:0.25px;">Develop project cost</div>
<div class="a" style="left:298px;top:1132px;font-size:20.3px;color:#333333;font-weight:400;letter-spacing:0.25px;">budget</div>
<div class="chip" style="left:371px;top:1129.5px;width:146.5px;height:26px"></div>
<svg class="a" style="left:374px;top:1133px" width="20" height="19" viewBox="0 -1 20 19"><rect x="2" y="1.6" width="16.2" height="15.8" rx="3.2" fill="#F4F4F4" stroke="#ABABAB" stroke-width="1.5"/><path d="M1.3 4.6 V3.9 A3.2 3.2 0 0 1 4.5 0.9 H15.7 A3.2 3.2 0 0 1 18.9 3.9 V4.6 Z" fill="#A0A0A0"/><path d="M5.9 -0.4 V2 M14.4 -0.4 V2" stroke="#A0A0A0" stroke-width="1.6" stroke-linecap="round"/><g fill="#B2B2B2"><circle cx="8.8" cy="7.5" r="0.85"/><circle cx="11.6" cy="7.5" r="0.85"/><circle cx="14.5" cy="7.5" r="0.85"/><circle cx="5.9" cy="10.5" r="0.85"/><circle cx="8.8" cy="10.5" r="0.85"/><circle cx="11.6" cy="10.5" r="0.85"/><circle cx="14.5" cy="10.5" r="0.85"/><circle cx="5.9" cy="13.4" r="0.85"/><circle cx="8.8" cy="13.4" r="0.85"/><circle cx="11.6" cy="13.4" r="0.85"/></g></svg>
<div class="a" style="left:398.5px;top:1132.8px;font-size:20.3px;color:#333333;font-weight:400;letter-spacing:0.12px;">08 Sep 2021</div>
<div class="a" style="left:750px;top:1098px;font-size:20.3px;color:#333333;font-weight:400;letter-spacing:0.3px;">08 Sep 2021</div>
<div class="a" style="left:895px;top:1098px;font-size:20.3px;color:#0052CC;font-weight:400;letter-spacing:0.03px;">Alexander Sundukov</div>
<div class="a" style="left:1125px;top:1098px;font-size:20.3px;color:#0052CC;font-weight:400;letter-spacing:0.2px;">Resource</div>
<div class="a" style="left:1125px;top:1132px;font-size:20.3px;color:#0052CC;font-weight:400;letter-spacing:0.2px;">management</div>
</body></html>
